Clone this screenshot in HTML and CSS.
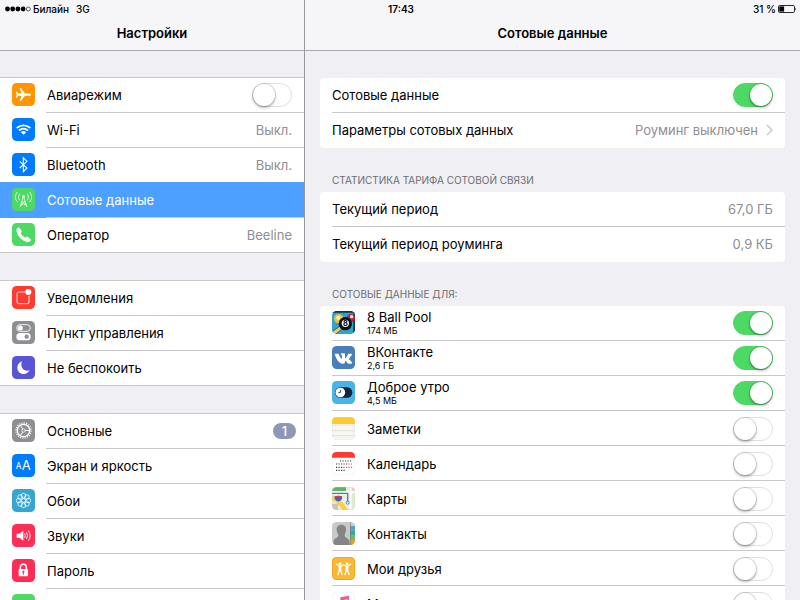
FILE: index.html
```
<!DOCTYPE html>
<html lang="ru">
<head>
    <meta charset="UTF-8">
    <meta name="viewport" content="width=device-width, initial-scale=1.0">
    <title>Настройки</title>
    <link rel="stylesheet" href="styles.css">
</head>
<body>
    <div class="status-bar">
        <div class="status-left">
            <svg class="signal" width="26" height="6" viewBox="0 0 26 6">
                <circle cx="2.5" cy="3" r="2.4"/>
                <circle cx="7.7" cy="3" r="2.4"/>
                <circle cx="12.9" cy="3" r="2.4"/>
                <circle cx="18.1" cy="3" r="2.4"/>
                <circle cx="23.3" cy="3" r="2" fill="none" stroke="#000" stroke-width="0.6"/>
            </svg>
            <span>Билайн</span>
            <span class="network">3G</span>
        </div>
        <div class="status-time">17:43</div>
        <div class="status-right">
            <span>31 %</span>
            <svg width="19" height="8" viewBox="0 0 19 8">
                <rect x="0.5" y="0.5" width="16" height="7" rx="1.3" fill="none" stroke="#111" stroke-width="0.9"/>
                <rect x="1.3" y="1.4" width="4.8" height="5.2"/>
                <path d="M17.4 2.4q1.5 1.6 0 3.2z"/>
            </svg>
        </div>
    </div>

    <div class="split">
        <aside class="sidebar">
            <header class="navbar"><h1>Настройки</h1></header>
            <nav class="scroll">
                <ul class="group">
                    <li class="row">
                        <svg class="icon" viewBox="0 0 69 69">
                            <rect width="69" height="69" rx="14" fill="#ff9500"/>
                            <path fill="#fff" d="M57 35c0-2-4-3.500-8-3.500H39L27 16h-4l6 15.500H19L14 26h-3l3 9-3 9h3l5-5.500h10L23 54h4l12-15.500h10c4 0 8-1.500 8-3.500z"/>
                        </svg>
                        <label class="name" for="airplane">Авиарежим</label>
                        <input class="toggle" type="checkbox" id="airplane">
                    </li>
                    <li>
                        <a class="row" href="#wifi">
                            <svg class="icon" viewBox="0 0 69 69">
                                <rect width="69" height="69" rx="14" fill="#007aff"/>
                                <g fill="none" stroke="#fff" stroke-width="5">
                                    <path d="M14 30q20.500-16 41 0"/>
                                    <path d="M21 37.500q13.500-11 27 0"/>
                                </g>
                                <path fill="#fff" d="M26.500 42.500q8-6.500 16 0l-8 8z"/>
                            </svg>
                            <span class="name">Wi-Fi</span>
                            <span class="value">Выкл.</span>
                        </a>
                    </li>
                    <li>
                        <a class="row" href="#bluetooth">
                            <svg class="icon" viewBox="0 0 69 69">
                                <rect width="69" height="69" rx="14" fill="#007aff"/>
                                <path fill="none" stroke="#fff" stroke-width="3.200" d="M23 25l22 20-11 11V14l11 11-22 20"/>
                            </svg>
                            <span class="name">Bluetooth</span>
                            <span class="value">Выкл.</span>
                        </a>
                    </li>
                    <li>
                        <a class="row selected" href="#cellular" aria-current="page">
                            <svg class="icon" viewBox="0 0 69 69">
                                <rect width="69" height="69" rx="14" fill="#4cd964"/>
                                <g fill="none" stroke="#e6fbe9" stroke-width="2.600">
                                    <path d="M16 12q-12 15 0 30M23 17q-8 10 0 20M53 12q12 15 0 30M46 17q8 10 0 20"/>
                                    <path d="M34.500 26L24 57M34.500 26L45 57M30 40l12 9M39 40l-12 9M26 52l8.500-4 8.500 4"/>
                                </g>
                                <circle cx="34.500" cy="26" r="4" fill="#fff"/>
                            </svg>
                            <span class="name">Сотовые данные</span>
                        </a>
                    </li>
                    <li>
                        <a class="row" href="#carrier">
                            <svg class="icon" viewBox="0 0 69 69">
                                <rect width="69" height="69" rx="14" fill="#4cd964"/>
                                <path fill="#fff" d="M15 16c3-3 6-4 8-1l6 9c1 2 0 4-3 6 3 6 8 11 14 14 2-3 4-4 6-3l9 6c3 2 2 5-1 8-5 5-15 2-25-6S10 26 15 16z"/>
                            </svg>
                            <span class="name">Оператор</span>
                            <span class="value">Beeline</span>
                        </a>
                    </li>
                </ul>

                <ul class="group">
                    <li>
                        <a class="row" href="#notifications">
                            <svg class="icon" viewBox="0 0 69 69">
                                <rect width="69" height="69" rx="14" fill="#ff3b30"/>
                                <path fill="none" stroke="#fff" stroke-width="2.600" d="M40 18H20q-5 0-5 5v25q0 5 5 5h26q5 0 5-5V29"/>
                                <circle cx="49" cy="18" r="9" fill="#fff"/>
                            </svg>
                            <span class="name">Уведомления</span>
                        </a>
                    </li>
                    <li>
                        <a class="row" href="#control-center">
                            <svg class="icon" viewBox="0 0 69 69">
                                <rect width="69" height="69" rx="14" fill="#8e8e93"/>
                                <rect x="14" y="11" width="41" height="20" rx="10" fill="none" stroke="#fff" stroke-width="2.600"/>
                                <circle cx="25" cy="21" r="7.500" fill="#fff"/>
                                <rect x="13" y="36" width="43" height="22" rx="11" fill="#fff"/>
                                <circle cx="44" cy="47" r="6.500" fill="#8e8e93"/>
                            </svg>
                            <span class="name">Пункт управления</span>
                        </a>
                    </li>
                    <li>
                        <a class="row" href="#do-not-disturb">
                            <svg class="icon" viewBox="0 0 69 69">
                                <rect width="69" height="69" rx="14" fill="#5856d6"/>
                                <path fill="#fff" d="M30 16c-8 3-14 10-14 19 0 11 8 19 19 19 8 0 14-4 17-11C38 49 22 35 30 16z"/>
                            </svg>
                            <span class="name">Не беспокоить</span>
                        </a>
                    </li>
                </ul>

                <ul class="group">
                    <li>
                        <a class="row" href="#general">
                            <svg class="icon" viewBox="0 0 69 69">
                                <rect width="69" height="69" rx="14" fill="#8e8e93"/>
                                <g fill="none" stroke="#fff">
                                    <circle cx="34.500" cy="34.500" r="22.500" stroke-width="4" stroke-dasharray="3.500 3.568"/>
                                    <circle cx="34.500" cy="34.500" r="18.500" stroke-width="4"/>
                                    <circle cx="34.500" cy="34.500" r="5" stroke-width="2.500"/>
                                    <path stroke-width="2.800" d="M39.500 34.500H52M32 30l-7-11M32 39l-7 11"/>
                                </g>
                            </svg>
                            <span class="name">Основные</span>
                            <span class="badge">1</span>
                        </a>
                    </li>
                    <li>
                        <a class="row" href="#display">
                            <svg class="icon" viewBox="0 0 69 69">
                                <rect width="69" height="69" rx="14" fill="#007aff"/>
                                <text class="glyph" x="11" y="45" font-size="25">A</text>
                                <text class="glyph" x="29" y="47" font-size="39">A</text>
                            </svg>
                            <span class="name">Экран и яркость</span>
                        </a>
                    </li>
                    <li>
                        <a class="row" href="#wallpaper">
                            <svg class="icon" viewBox="0 0 69 69">
                                <rect width="69" height="69" rx="14" fill="#37a5cf"/>
                                <g fill="none" stroke="#fff" stroke-width="2.300">
                                    <circle cx="34.500" cy="20" r="7"/>
                                    <circle cx="44.800" cy="24.200" r="7"/>
                                    <circle cx="49" cy="34.500" r="7"/>
                                    <circle cx="44.800" cy="44.800" r="7"/>
                                    <circle cx="34.500" cy="49" r="7"/>
                                    <circle cx="24.200" cy="44.800" r="7"/>
                                    <circle cx="20" cy="34.500" r="7"/>
                                    <circle cx="24.200" cy="24.200" r="7"/>
                                    <circle cx="34.500" cy="34.500" r="6"/>
                                </g>
                            </svg>
                            <span class="name">Обои</span>
                        </a>
                    </li>
                    <li>
                        <a class="row" href="#sounds">
                            <svg class="icon" viewBox="0 0 69 69">
                                <rect width="69" height="69" rx="14" fill="#ff2d55"/>
                                <path fill="#fff" d="M14 29h8l12-9v30l-12-9h-8z"/>
                                <path fill="none" stroke="#fff" stroke-width="2.800" d="M38 29q4 6 0 12M43 25q8 10 0 20M49 20q11 15 0 30"/>
                            </svg>
                            <span class="name">Звуки</span>
                        </a>
                    </li>
                    <li>
                        <a class="row" href="#passcode">
                            <svg class="icon" viewBox="0 0 69 69">
                                <rect width="69" height="69" rx="14" fill="#ff2d55"/>
                                <path fill="none" stroke="#fff" stroke-width="4.500" d="M25 33v-8q0-9 9-9t9 9v8"/>
                                <rect x="20" y="30" width="28" height="22" rx="2" fill="#fff"/>
                                <path fill="#ff2d55" d="M34 35a3.500 3.500 0 0 1 1.500 6.500V47h-3v-5.500A3.500 3.500 0 0 1 34 35z"/>
                            </svg>
                            <span class="name">Пароль</span>
                        </a>
                    </li>
                    <li>
                        <a class="row" href="#battery">
                            <svg class="icon" viewBox="0 0 69 69">
                                <rect width="69" height="69" rx="14" fill="#4cd964"/>
                                <rect x="13" y="24" width="40" height="21" rx="4" fill="#fff"/>
                            </svg>
                            <span class="name">Батарея</span>
                        </a>
                    </li>
                </ul>
            </nav>
        </aside>

        <main class="detail">
            <header class="navbar"><h2>Сотовые данные</h2></header>
            <div class="scroll">
                <ul class="card">
                    <li class="row">
                        <label class="name" for="cellular-data">Сотовые данные</label>
                        <input class="toggle" type="checkbox" id="cellular-data" checked>
                    </li>
                    <li>
                        <a class="row" href="#options">
                            <span class="name">Параметры сотовых данных</span>
                            <span class="value">Роуминг выключен</span>
                            <svg class="chevron" width="7" height="12" viewBox="0 0 7 12">
                                <path fill="none" stroke="#c7c7cc" stroke-width="1.400" d="M1 1l5 5-5 5"/>
                            </svg>
                        </a>
                    </li>
                </ul>

                <h3 class="card-title">Статистика тарифа сотовой связи</h3>
                <ul class="card">
                    <li class="row">
                        <span class="name">Текущий период</span>
                        <span class="value">67,0 ГБ</span>
                    </li>
                    <li class="row">
                        <span class="name">Текущий период роуминга</span>
                        <span class="value">0,9 КБ</span>
                    </li>
                </ul>

                <h3 class="card-title">Сотовые данные для:</h3>
                <ul class="card">
                    <li class="row">
                        <svg class="icon" viewBox="0 0 69 69">
                            <clipPath id="clip-pool"><rect width="69" height="69" rx="14"/></clipPath>
                            <g clip-path="url(#clip-pool)">
                                <rect width="69" height="69" fill="#2ba5cf"/>
                                <path fill="#16324a" d="M0 0h69v5H0zM64 0h5v69h-5z"/>
                                <circle cx="20" cy="23" r="14" fill="#e8c044"/>
                                <circle cx="19" cy="20" r="6" fill="#fff2b8"/>
                                <circle cx="57" cy="21" r="12" fill="#c5202c"/>
                                <circle cx="59" cy="17" r="5" fill="#fff"/>
                                <path fill="#e9c877" stroke="#4b3213" stroke-width="2" d="M-2 64l28-20 6 8L6 74z"/>
                                <circle cx="40" cy="38" r="20" fill="#111"/>
                                <circle cx="40" cy="37" r="11" fill="#fff"/>
                                <text class="glyph-dark" x="40" y="45" font-size="22" text-anchor="middle">8</text>
                            </g>
                        </svg>
                        <label class="name" for="app-pool">8 Ball Pool<small>174 МБ</small></label>
                        <input class="toggle" type="checkbox" id="app-pool" checked>
                    </li>
                    <li class="row">
                        <svg class="icon" viewBox="0 0 69 69">
                            <rect width="69" height="69" rx="14" fill="#4a7ebb"/>
                            <path fill="#fff" d="M10 23h8c2 0 2 1 3 3 3 8 7 12 8 12 2 0 1-9 0-11-1-2-3-2-3-3s2-2 4-2h6c3 0 3 1 3 4v9c0 3 2 2 4-1 3-4 4-8 5-9 1-2 2-2 3-2h7c3 0 2 2 1 4-2 4-8 10-8 12 0 3 10 8 9 12 0 2-2 2-4 2h-6c-4 0-7-8-10-8-2 0-1 5-2 7-1 1-3 1-5 1-13 0-20-15-24-26-1-2-1-4 1-4z"/>
                        </svg>
                        <label class="name" for="app-vk">ВКонтакте<small>2,6 ГБ</small></label>
                        <input class="toggle" type="checkbox" id="app-vk" checked>
                    </li>
                    <li class="row">
                        <svg class="icon" viewBox="0 0 69 69">
                            <rect width="69" height="69" rx="14" fill="#4cb3e6"/>
                            <rect x="9" y="19" width="52" height="31" rx="15.500" fill="#10283d"/>
                            <circle cx="25" cy="34.500" r="14.500" fill="#fff"/>
                            <path fill="none" stroke="#10283d" stroke-width="2.500" d="M25 27v8h-6"/>
                        </svg>
                        <label class="name" for="app-morning">Доброе утро<small>4,5 МБ</small></label>
                        <input class="toggle" type="checkbox" id="app-morning" checked>
                    </li>
                    <li class="row plain">
                        <svg class="icon" viewBox="0 0 69 69">
                            <rect x="0.500" y="0.500" width="68" height="68" rx="14" fill="#f7f6f2" stroke="#d5d4d0"/>
                            <path fill="#fccb2f" d="M0 21v-7Q0 0 14 0h41q14 0 14 14v7z"/>
                            <path fill="none" stroke="#b9b5a8" stroke-width="2" stroke-dasharray="2 3" d="M0 24h69"/>
                            <path stroke="#cfcdc8" stroke-width="1.500" d="M0 41h69M0 56h69"/>
                        </svg>
                        <label class="name" for="app-notes">Заметки</label>
                        <input class="toggle" type="checkbox" id="app-notes">
                    </li>
                    <li class="row plain">
                        <svg class="icon" viewBox="0 0 69 69">
                            <rect x="0.500" y="0.500" width="68" height="68" rx="14" fill="#fff" stroke="#dcdcdc"/>
                            <path fill="#fb3b34" d="M0 17v-3Q0 0 14 0h41q14 0 14 14v3z"/>
                            <path stroke="#333" stroke-width="3.500" stroke-dasharray="3.500 4" d="M24 27h34M12 36h34M12 46h25M12 55h27"/>
                            <path stroke="#fb3b34" stroke-width="3.500" stroke-dasharray="3.500 4" d="M49 36h11M42 46h4"/>
                            <path stroke="#777" stroke-width="3.500" stroke-dasharray="3.500 4" d="M49.500 46h11"/>
                        </svg>
                        <label class="name" for="app-calendar">Календарь</label>
                        <input class="toggle" type="checkbox" id="app-calendar">
                    </li>
                    <li class="row plain">
                        <svg class="icon" viewBox="0 0 69 69">
                            <clipPath id="clip-maps"><rect width="69" height="69" rx="14"/></clipPath>
                            <g clip-path="url(#clip-maps)">
                                <rect width="69" height="69" fill="#f1ede2"/>
                                <path fill="#5cb85c" d="M0 0h42v13H0z"/>
                                <path fill="#f0c5cb" d="M52 0h17v14H52z"/>
                                <path fill="#d9eecb" d="M55 20h14v49H55z"/>
                                <path fill="#c9c5bd" d="M0 50h18v19H0z"/>
                                <path fill="none" stroke="#fff" stroke-width="5" d="M0 15h69M56 0v69"/>
                                <path fill="none" stroke="#fbd13c" stroke-width="15" d="M0 32q22 8 42 40"/>
                                <path fill="none" stroke="#2f80e8" stroke-width="4" d="M0 19h47v26"/>
                                <circle cx="47" cy="47" r="4.500" fill="#fff" stroke="#2f80e8" stroke-width="3"/>
                                <path fill="#3c66b5" stroke="#fff" stroke-width="1.500" d="M7 28q12-4 24 0 3 13-12 17Q4 41 7 28z"/>
                                <path fill="#d9364b" d="M8 28q11-4 22 0v4H8z"/>
                            </g>
                            <rect x="0.500" y="0.500" width="68" height="68" rx="14" fill="none" stroke="#c9cdc6"/>
                        </svg>
                        <label class="name" for="app-maps">Карты</label>
                        <input class="toggle" type="checkbox" id="app-maps">
                    </li>
                    <li class="row plain">
                        <svg class="icon" viewBox="0 0 69 69">
                            <clipPath id="clip-contacts"><rect width="69" height="69" rx="14"/></clipPath>
                            <g clip-path="url(#clip-contacts)">
                                <rect width="69" height="69" fill="#c9c9c9"/>
                                <path fill="#858585" d="M28 8c10 0 15 7 14 16 0 7-3 10-4 14 0 5 2 7 6 10 6 3 9 5 9 21H4c0-16 3-18 9-21 4-3 6-5 6-10-1-4-5-7-5-14C13 15 18 8 28 8z"/>
                                <rect x="54" width="2" height="69" fill="#555"/>
                                <path fill="#cfcfcf" d="M56 0h13v12H56z"/>
                                <path fill="#4da3d8" d="M56 12h13v14H56z"/>
                                <path fill="#35a9a0" d="M56 26h13v14H56z"/>
                                <path fill="#61c454" d="M56 40h13v14H56z"/>
                                <path fill="#ee9a35" d="M56 54h13v15H56z"/>
                            </g>
                        </svg>
                        <label class="name" for="app-contacts">Контакты</label>
                        <input class="toggle" type="checkbox" id="app-contacts">
                    </li>
                    <li class="row plain">
                        <svg class="icon" viewBox="0 0 69 69">
                            <rect width="69" height="69" rx="14" fill="#f5a11f"/>
                            <rect x="5" y="5" width="59" height="59" rx="10" fill="#fbb62f" stroke="#ffd574" stroke-width="1.500"/>
                            <g fill="#fff">
                                <circle cx="24" cy="20" r="4.500"/>
                                <circle cx="45" cy="20" r="4.500"/>
                                <path d="M20 26h8v15h-8zM41 26h8v15h-8z"/>
                            </g>
                            <path fill="none" stroke="#fff" stroke-width="3.500" stroke-linecap="round" stroke-linejoin="round" d="M13 21l8 7h6l7.500-5L42 28h6l8-7"/>
                            <path fill="none" stroke="#fff" stroke-width="4" stroke-linecap="round" d="M22 40l-4 13M26 40l4 13M43 40l-4 13M47 40l4 13"/>
                        </svg>
                        <label class="name" for="app-friends">Мои друзья</label>
                        <input class="toggle" type="checkbox" id="app-friends">
                    </li>
                    <li class="row plain">
                        <svg class="icon" viewBox="0 0 69 69">
                            <rect x="0.500" y="0.500" width="68" height="68" rx="14" fill="#fff" stroke="#dcdcdc"/>
                            <path fill="#ee5a8c" d="M25 16l26-5v32h-5V22l-16 3v25h-5z"/>
                            <ellipse cx="23" cy="50" rx="8" ry="6" fill="#a45ce0"/>
                            <ellipse cx="44" cy="44" rx="8" ry="6" fill="#5a8cee"/>
                        </svg>
                        <label class="name" for="app-music">Музыка</label>
                        <input class="toggle" type="checkbox" id="app-music">
                    </li>
                </ul>
            </div>
        </main>
    </div>
</body>
</html>
```
FILE: styles.css
```
* {
    box-sizing: border-box;
}

body {
    margin: 0;
    background-color: #efeff4;
    font-family: Inter, "Liberation Sans", sans-serif;
    font-size: 13px;
    color: #000;
}

ul {
    list-style: none;
    margin: 0;
    padding: 0;
}

a {
    color: inherit;
    text-decoration: none;
}

/* Status bar lies over both navigation bars */
.status-bar {
    position: absolute;
    top: 0;
    left: 0;
    right: 0;
    display: grid;
    grid-template-columns: 1fr auto 1fr;
    align-items: center;
    height: 17px;
    padding: 0 3px 0 5px;
    font-size: 10px;
    font-weight: 500;
    z-index: 10;
}

.status-left,
.status-right {
    display: flex;
    align-items: center;
    gap: 2px;
}

.status-right {
    justify-content: flex-end;
}

.status-time {
    font-weight: 600;
}

.network {
    margin-left: 5px;
}

/* Two panes */
.split {
    display: grid;
    grid-template-columns: 305px 1fr;
    height: 100vh;
}

.sidebar,
.detail {
    display: flex;
    flex-direction: column;
    min-width: 0;
    min-height: 0;
}

.sidebar {
    border-right: 1px solid #98989d;
}

.navbar {
    flex: none;
    padding: 17px 0 0;
    background-color: #f6f6f8;
    border-bottom: 1px solid #a9a9b0;
    text-align: center;
}

.navbar h1,
.navbar h2 {
    margin: 0;
    font-size: 13px;
    font-weight: 600;
    line-height: 33px;
}

.scroll {
    flex: 1;
    min-height: 0;
    overflow-y: auto;
    scrollbar-width: none;
}

.sidebar .scroll {
    padding-top: 26px;
}

.detail .scroll {
    padding: 27px 15px 0;
}

/* Rows */
.row {
    position: relative;
    display: flex;
    align-items: center;
    gap: 12px;
    height: 35px;
    padding: 0 12px 2px;
}

.row.plain {
    padding-bottom: 0;
}

.row::after {
    content: "";
    position: absolute;
    left: 12px;
    right: 0;
    bottom: 0;
    height: 1px;
    background-color: #c8c7cc;
}

.icon {
    flex: none;
    width: 23px;
    height: 23px;
}

.name {
    flex: 1;
    line-height: 16px;
}

.name small {
    display: block;
    font-size: 9px;
    line-height: 12px;
}

.value {
    color: #8e8e93;
}

.chevron {
    flex: none;
    margin-left: -4px;
}

.glyph {
    fill: #fff;
}

.glyph-dark {
    fill: #000;
    font-weight: 700;
}

/* Sidebar groups */
.group {
    background-color: #fff;
    border-top: 1px solid #c8c7cc;
    margin-bottom: 27px;
}

.group .row::after {
    left: 46px;
}

.group li:last-child .row::after {
    left: 0;
}

.row.selected {
    background-color: #4da0ff;
    box-shadow: 0 -1px 0 #4da0ff;
    color: #fff;
}

.badge {
    min-width: 23px;
    margin-right: -4px;
    border-radius: 8px;
    background-color: #8c98b5;
    color: #fff;
    font-weight: 500;
    line-height: 16px;
    text-align: center;
}

/* Detail cards */
.card {
    background-color: #fff;
    border-radius: 4px;
}

.card > :last-child.row::after,
.card > :last-child .row::after {
    display: none;
}

.card-title {
    margin: 0;
    padding: 24px 12px 4px;
    font-size: 10px;
    font-weight: 400;
    line-height: 16px;
    text-transform: uppercase;
    color: #6d6d72;
}

/* Switch */
.toggle {
    appearance: none;
    flex: none;
    width: 40px;
    height: 24px;
    margin: 0;
    border: 1px solid #e0e0e2;
    border-radius: 12px;
    background-color: #fff;
}

.toggle::before {
    content: "";
    display: block;
    width: 22px;
    height: 22px;
    border-radius: 50%;
    background-color: #fff;
    box-shadow: 0 0 1px 1px rgba(0, 0, 0, 0.15), 0 2px 3px rgba(0, 0, 0, 0.25);
}

.toggle:checked {
    border-color: #4cd964;
    background-color: #4cd964;
}

.toggle:checked::before {
    margin-left: 16px;
}
```
